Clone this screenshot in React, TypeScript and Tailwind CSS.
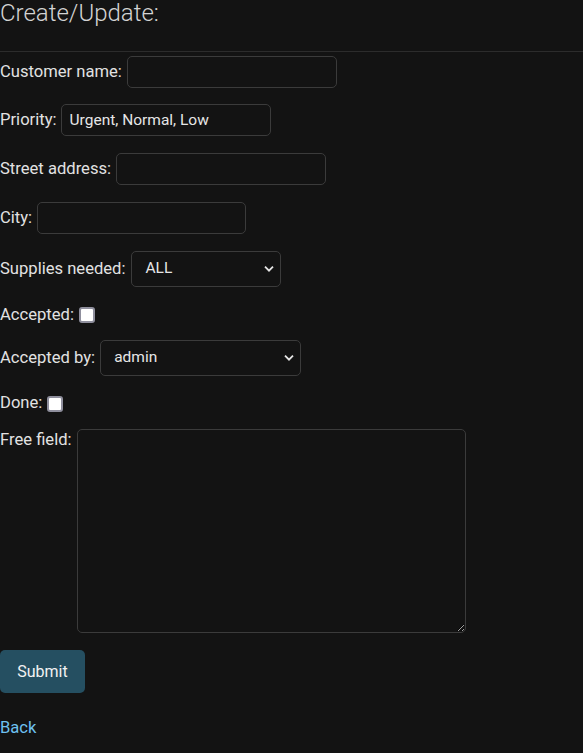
import React from "react";

function Chevron() {
  return (
    <svg
      className="pointer-events-none absolute right-[7px] top-1/2 -translate-y-1/2"
      width="10"
      height="7"
      viewBox="0 0 10 7"
      fill="none"
    >
      <path d="M1 1.2 L5 5.2 L9 1.2" stroke="#e6e6e6" strokeWidth="1.8" />
    </svg>
  );
}

function Checkbox() {
  return (
    <input
      type="checkbox"
      className="appearance-none w-4 h-4 rounded-[3px] border-2 border-[#8f8f9d] bg-white m-0"
    />
  );
}

export default function App() {
  const inputCls =
    "w-[210px] h-8 border border-[#3b3b3b] rounded-[5px] bg-[#131313] px-2 text-[15.5px] text-[#e6e6e6] outline-none";
  return (
    <div
      className="min-h-screen w-full bg-[#131313] text-[#e2e2e2] text-[16.6px]"
      style={{ fontFamily: "Roboto, 'Noto Sans', sans-serif" }}
    >
      <h1 className="text-[24px] leading-[26px] font-light text-[#d4d4d4] m-0">
        Create/Update:
      </h1>
      <div className="mt-[25px] h-px bg-[#2c2c2c]" />

      <form>
        <div className="mt-[4px] flex items-center gap-[5px] h-8">
          <label>Customer name:</label>
          <input className={inputCls} />
        </div>
        <div className="mt-4 flex items-center gap-1 h-8">
          <label>Priority:</label>
          <input className={inputCls} defaultValue="Urgent, Normal, Low" />
        </div>
        <div className="mt-[17px] flex items-center gap-[5px] h-8">
          <label>Street address:</label>
          <input className={inputCls} />
        </div>
        <div className="mt-[17px] flex items-center gap-[5px] h-8">
          <label>City:</label>
          <input className={inputCls + " !w-[209px]"} />
        </div>
        <div className="mt-[17px] flex items-center gap-[6px] h-9">
          <label>Supplies needed:</label>
          <div className="relative">
            <select className="appearance-none w-[150px] h-9 border border-[#3b3b3b] rounded-[5px] bg-[#131313] pl-[13px] pr-6 text-[15.5px] text-[#e6e6e6] outline-none">
              <option>ALL</option>
            </select>
            <Chevron />
          </div>
        </div>
        <div className="mt-4 flex items-center gap-[5px] h-6">
          <label>Accepted:</label>
          <Checkbox />
        </div>
        <div className="mt-[13px] flex items-center gap-[5px] h-9">
          <label>Accepted by:</label>
          <div className="relative">
            <select className="appearance-none w-[201px] h-9 border border-[#3b3b3b] rounded-[5px] bg-[#131313] pl-[13px] pr-6 text-[15.5px] text-[#e6e6e6] outline-none">
              <option>admin</option>
            </select>
            <Chevron />
          </div>
        </div>
        <div className="mt-4 flex items-center gap-[5px] h-6">
          <label className="mt-[-2px]">Done:</label>
          <Checkbox />
        </div>
        <div className="mt-[13px] flex items-start gap-[5px]">
          <label className="mt-[-1px]">Free field:</label>
          <textarea className="w-[389px] h-[204px] border border-[#3b3b3b] rounded-[5px] bg-[#131313] text-[#e6e6e6] outline-none p-2" />
        </div>
        <button
          type="button"
          className="mt-[17px] w-[85px] h-[43px] rounded-[5px] bg-[#254f61] text-[#f2f2f2] text-[16px]"
        >
          Submit
        </button>
      </form>
      <div className="mt-[23px] leading-6">
        <a href="#" className="text-[#6ec1f0] no-underline">
          Back
        </a>
      </div>
    </div>
  );
}
